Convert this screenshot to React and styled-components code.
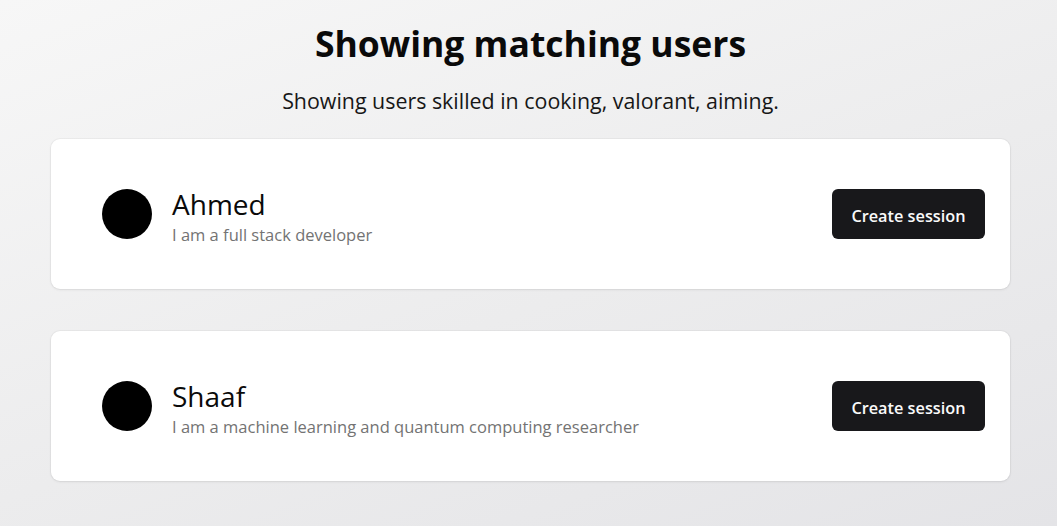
import React from "react";
import styled, { createGlobalStyle } from "styled-components";

const Global = createGlobalStyle`
  html, body { margin: 0; padding: 0; }
  body {
    font-family: "Open Sans", "Noto Sans", sans-serif;
    background: linear-gradient(160deg, #f7f7f7 0%, #ececed 55%, #e4e4e7 100%);
    min-height: 526px;
  }
  #root { min-height: 526px; }
`;

const Page = styled.main`
  display: flex;
  flex-direction: column;
  align-items: center;
  padding: 19px 47px 0 51px;
  box-sizing: border-box;
`;

const Title = styled.h1`
  margin: 0;
  font-size: 35.5px;
  font-weight: 700;
  color: #0a0a0a;
  line-height: 48px;
`;

const Subtitle = styled.p`
  margin: 19px 0 0;
  font-size: 21.4px;
  color: #171717;
  line-height: 30px;
`;

const List = styled.div`
  display: flex;
  flex-direction: column;
  gap: 42px;
  width: 100%;
  margin-top: 23px;
`;

const Card = styled.section`
  display: flex;
  align-items: center;
  justify-content: space-between;
  height: 150px;
  box-sizing: border-box;
  padding: 0 25px 0 51px;
  background: #ffffff;
  border-radius: 9px;
  box-shadow: 0 0 0 1px rgba(0, 0, 0, 0.03), 0 1px 3px rgba(0, 0, 0, 0.07);
`;

const User = styled.div`
  display: flex;
  align-items: center;
  gap: 20px;
`;

const Avatar = styled.div`
  width: 50px;
  height: 50px;
  border-radius: 50%;
  background: #000;
  flex-shrink: 0;
`;

const Info = styled.div`
  display: flex;
  flex-direction: column;
  padding-top: 2px;
`;

const Name = styled.div`
  font-size: 28px;
  line-height: 38px;
  color: #0a0a0a;
`;

const Bio = styled.div`
  font-size: 16.5px;
  line-height: 23px;
  color: #737373;
`;

const Button = styled.button`
  width: 153px;
  height: 50px;
  padding: 3px 0 0;
  border: none;
  border-radius: 6px;
  background: #18181b;
  color: #fafafa;
  font-family: inherit;
  font-size: 16.3px;
  font-weight: 600;
  cursor: pointer;
`;

const users = [
  { name: "Ahmed", bio: "I am a full stack developer" },
  { name: "Shaaf", bio: "I am a machine learning and quantum computing researcher" },
];

export default function App() {
  return (
    <>
      <Global />
      <Page>
        <Title>Showing matching users</Title>
        <Subtitle>Showing users skilled in cooking, valorant, aiming.</Subtitle>
        <List>
          {users.map((u) => (
            <Card key={u.name}>
              <User>
                <Avatar />
                <Info>
                  <Name>{u.name}</Name>
                  <Bio>{u.bio}</Bio>
                </Info>
              </User>
              <Button>Create session</Button>
            </Card>
          ))}
        </List>
      </Page>
    </>
  );
}
